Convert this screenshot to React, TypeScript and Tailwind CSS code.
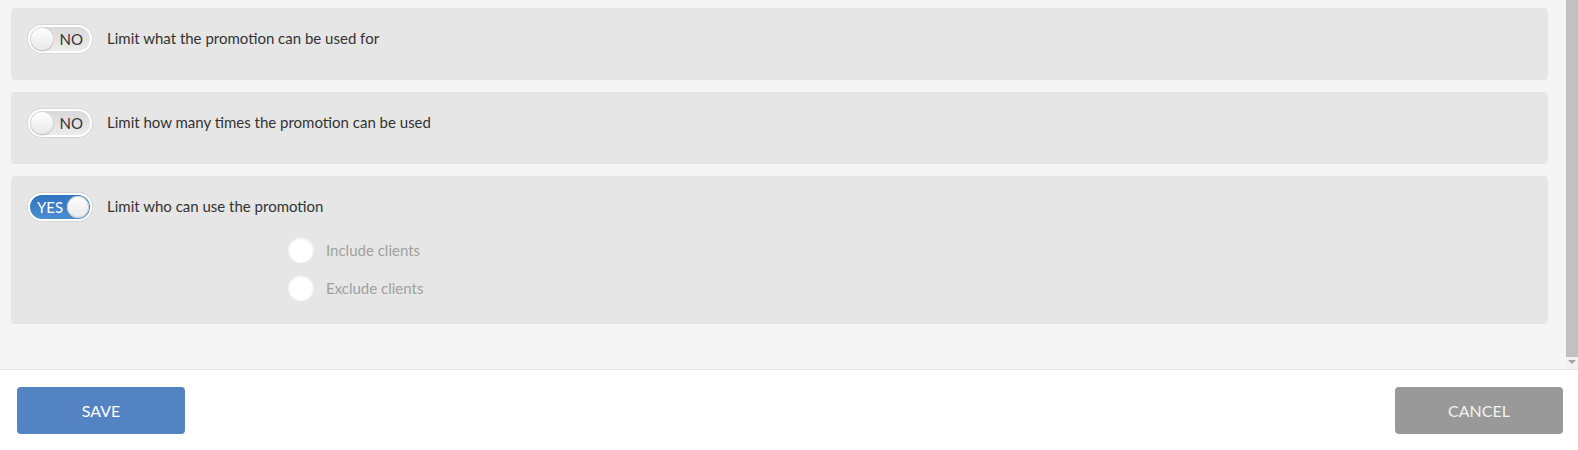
import React from 'react'

const font = { fontFamily: 'Lato, "Liberation Sans", sans-serif' }

function Toggle({ on }: { on: boolean }): React.JSX.Element {
  if (on) {
    return (
      <div className="flex h-[28px] w-[64px] shrink-0 items-center justify-between rounded-full border-2 border-white bg-gradient-to-b from-[#2f74bd] to-[#4a8fd2] pl-[7px] pr-[1px] shadow-[0_0_0_1px_#d6d6d6]">
        <span className="text-[15px] leading-none text-white">YES</span>
        <span className="h-[22px] w-[22px] rounded-full bg-gradient-to-b from-white to-[#e9e9e9] shadow-[inset_0_0_0_1px_#d0d0d0]" />
      </div>
    )
  }
  return (
    <div className="flex h-[28px] w-[64px] shrink-0 items-center justify-between rounded-full border-2 border-white bg-gradient-to-b from-[#d9d9d9] to-[#ececec] pl-[1px] pr-[7px] shadow-[0_0_0_1px_#d6d6d6]">
      <span className="h-[22px] w-[22px] rounded-full bg-gradient-to-b from-white to-[#e9e9e9] shadow-[0_1px_2px_rgba(0,0,0,0.25)]" />
      <span className="text-[15px] leading-none text-[#333]">NO</span>
    </div>
  )
}

function Radio({ label }: { label: string }): React.JSX.Element {
  return (
    <div className="flex items-center gap-[12px]">
      <span className="h-[26px] w-[26px] rounded-full bg-white shadow-[inset_0_1px_3px_rgba(0,0,0,0.12)]" />
      <span className="text-[15px] text-[#a0a0a0]">{label}</span>
    </div>
  )
}

function OptionCard({
  on,
  label,
  children,
}: {
  on: boolean
  label: string
  children?: React.ReactNode
}): React.JSX.Element {
  return (
    <div className="min-h-[72px] rounded-[4px] bg-[#e6e6e6] px-[17px] pt-[17px] pb-[23px]">
      <div className="flex items-center gap-[15px]">
        <Toggle on={on} />
        <span className="-mt-[2px] text-[15px] text-[#333]">{label}</span>
      </div>
      {children}
    </div>
  )
}

export default function App(): React.JSX.Element {
  return (
    <div className="flex h-[450px] w-[1578px] flex-col bg-white" style={font}>
      {/* Scrollable options area */}
      <div className="flex h-[370px] border-b border-[#e3e3e3] bg-[#f5f5f5]">
        <div className="flex flex-1 flex-col gap-[12px] pt-[8px] pl-[11px] pr-[18px]">
          <OptionCard on={false} label="Limit what the promotion can be used for" />
          <OptionCard on={false} label="Limit how many times the promotion can be used" />
          <OptionCard on={true} label="Limit who can use the promotion">
            <div className="flex flex-col gap-[12px] pt-[16px] pl-[260px]">
              <Radio label="Include clients" />
              <Radio label="Exclude clients" />
            </div>
          </OptionCard>
        </div>
        {/* Scrollbar */}
        <div className="flex w-[12px] flex-col bg-[#f1f1f1]">
          <div className="h-[357px] w-full bg-[#c1c1c1]" />
          <div className="flex flex-1 items-start justify-center pt-[3px]">
            <span className="h-0 w-0 border-x-[4px] border-t-[4px] border-x-transparent border-t-[#a3a3a3]" />
          </div>
        </div>
      </div>

      {/* Footer */}
      <div className="flex flex-1 items-start justify-between pt-[17px] pl-[17px] pr-[15px]">
        <button className="h-[47px] w-[168px] rounded-[4px] bg-[#5383c3] text-[16px] text-white">
          SAVE
        </button>
        <button className="h-[47px] w-[168px] rounded-[4px] bg-[#999999] text-[16px] text-[#f2f2f2]">
          CANCEL
        </button>
      </div>
    </div>
  )
}
